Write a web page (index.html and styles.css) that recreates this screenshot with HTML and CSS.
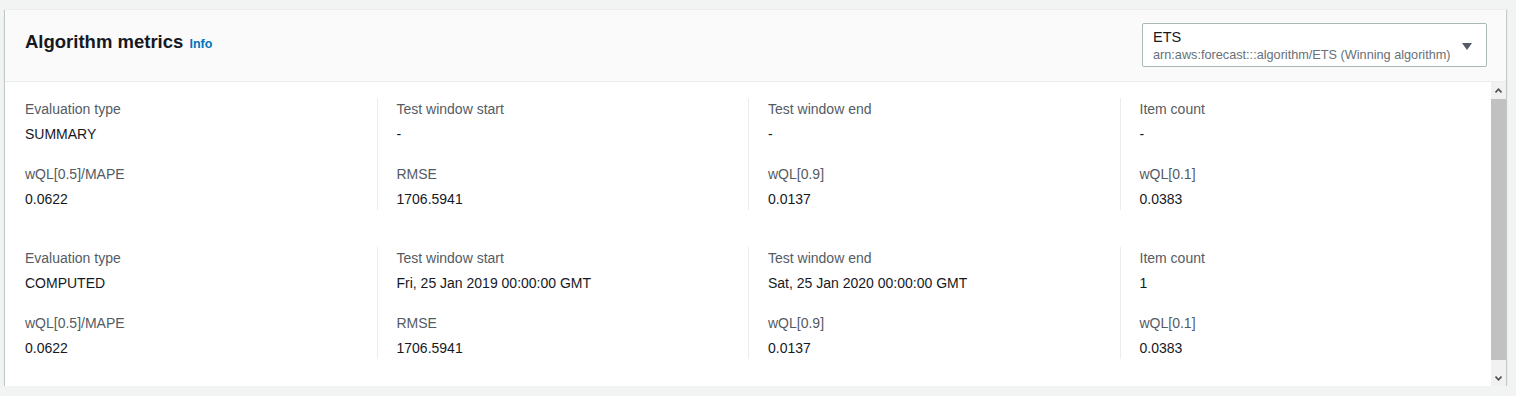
FILE: index.html
```html
<!DOCTYPE html>
<html lang="en">
<head>
  <meta charset="UTF-8" />
  <title>Algorithm metrics</title>
  <link rel="stylesheet" href="styles.css">
</head>
<body>
  <div class="panel">
    <div class="panel-header">
      <h2>Algorithm metrics <a class="info" href="#">Info</a></h2>
      <div class="select">
        <div class="select-text">
          <div class="select-title">ETS</div>
          <div class="select-sub">arn:aws:forecast:::algorithm/ETS (Winning algorithm)</div>
        </div>
        <svg class="caret" width="10" height="7" viewBox="0 0 10 7"><path d="M0 0h10L5 7z" fill="#545b64"/></svg>
      </div>
    </div>

    <div class="panel-body">
      <div class="metrics">
        <div class="row">
          <div class="col">
            <div class="pair"><div class="label">Evaluation type</div><div class="value">SUMMARY</div></div>
            <div class="pair"><div class="label">wQL[0.5]/MAPE</div><div class="value">0.0622</div></div>
          </div>
          <div class="col">
            <div class="pair"><div class="label">Test window start</div><div class="value">-</div></div>
            <div class="pair"><div class="label">RMSE</div><div class="value">1706.5941</div></div>
          </div>
          <div class="col">
            <div class="pair"><div class="label">Test window end</div><div class="value">-</div></div>
            <div class="pair"><div class="label">wQL[0.9]</div><div class="value">0.0137</div></div>
          </div>
          <div class="col">
            <div class="pair"><div class="label">Item count</div><div class="value">-</div></div>
            <div class="pair"><div class="label">wQL[0.1]</div><div class="value">0.0383</div></div>
          </div>
        </div>

        <div class="row">
          <div class="col">
            <div class="pair"><div class="label">Evaluation type</div><div class="value">COMPUTED</div></div>
            <div class="pair"><div class="label">wQL[0.5]/MAPE</div><div class="value">0.0622</div></div>
          </div>
          <div class="col">
            <div class="pair"><div class="label">Test window start</div><div class="value">Fri, 25 Jan 2019 00:00:00 GMT</div></div>
            <div class="pair"><div class="label">RMSE</div><div class="value">1706.5941</div></div>
          </div>
          <div class="col">
            <div class="pair"><div class="label">Test window end</div><div class="value">Sat, 25 Jan 2020 00:00:00 GMT</div></div>
            <div class="pair"><div class="label">wQL[0.9]</div><div class="value">0.0137</div></div>
          </div>
          <div class="col">
            <div class="pair"><div class="label">Item count</div><div class="value">1</div></div>
            <div class="pair"><div class="label">wQL[0.1]</div><div class="value">0.0383</div></div>
          </div>
        </div>
      </div>

      <!-- scrollbar as drawn by the browser -->
      <div class="scrollbar">
        <div class="sb-btn sb-up">
          <svg width="7" height="5" viewBox="0 0 7 5"><path d="M0.5 4.5L3.5 1.2L6.5 4.5" fill="none" stroke="#505050" stroke-width="1.6"/></svg>
        </div>
        <div class="sb-thumb"></div>
        <div class="sb-track"></div>
        <div class="sb-btn sb-down">
          <svg width="7" height="5" viewBox="0 0 7 5"><path d="M0.5 0.5L3.5 3.8L6.5 0.5" fill="none" stroke="#505050" stroke-width="1.6"/></svg>
        </div>
      </div>
    </div>
  </div>
</body>
</html>
```

FILE: styles.css
```css
* {
  box-sizing: border-box;
}

body {
  margin: 0;
  padding: 9px 10px 0 5px;
  background: #f2f3f3;
  font-family: "Liberation Sans", Arial, sans-serif;
  font-size: 14px;
  color: #16191f;
}

.panel {
  background: #fff;
  border-top: 1px solid #eaeded;
  box-shadow: 0 1px 1px 0 rgba(0, 28, 36, 0.3), 1px 1px 1px 0 rgba(0, 28, 36, 0.15), -1px 1px 1px 0 rgba(0, 28, 36, 0.15);
}

.panel-header {
  display: flex;
  align-items: flex-start;
  justify-content: space-between;
  background: #fafafa;
  border-bottom: 1px solid #eaeded;
  padding: 13px 19px 14px 20px;
}

h2 {
  margin: 0;
  padding-top: 8px;
  font-size: 18.5px;
  font-weight: bold;
  line-height: 22px;
  color: #16191f;
}

.info {
  color: #0073bb;
  font-size: 12.5px;
  text-decoration: none;
  margin-left: 1px;
}

.select {
  width: 345px;
  height: 44px;
  display: flex;
  align-items: center;
  justify-content: space-between;
  background: #fff;
  border: 1px solid #aab7b8;
  border-radius: 2px;
  padding: 2px 14px 0 10px;
}

.select-title {
  font-size: 14.5px;
  line-height: 18px;
}

.select-sub {
  font-size: 12.7px;
  line-height: 18px;
  color: #687078;
}

.caret {
  display: block;
}

.panel-body {
  height: 304px;
  display: flex;
  overflow: hidden;
}

.metrics {
  flex: 1;
  padding: 16px 0 41px;
  display: flex;
  flex-direction: column;
  gap: 37px;
}

.row {
  display: grid;
  grid-template-columns: repeat(4, 1fr);
}

.col {
  display: flex;
  flex-direction: column;
  gap: 18px;
  padding-left: 20px;
}

.col + .col {
  border-left: 1px solid #eaeded;
  padding-left: 19px;
}

.label {
  color: #545b64;
  line-height: 22px;
}

.value {
  margin-top: 3px;
  line-height: 22px;
}

.scrollbar {
  width: 15px;
  flex: none;
  display: flex;
  flex-direction: column;
  background: #f1f1f1;
}

.sb-btn {
  height: 17px;
  display: flex;
  align-items: center;
  justify-content: center;
}

.sb-down {
  height: 15px;
}

.sb-thumb {
  height: 261px;
  background: #c1c1c1;
}

.sb-track {
  flex: 1;
}
```
